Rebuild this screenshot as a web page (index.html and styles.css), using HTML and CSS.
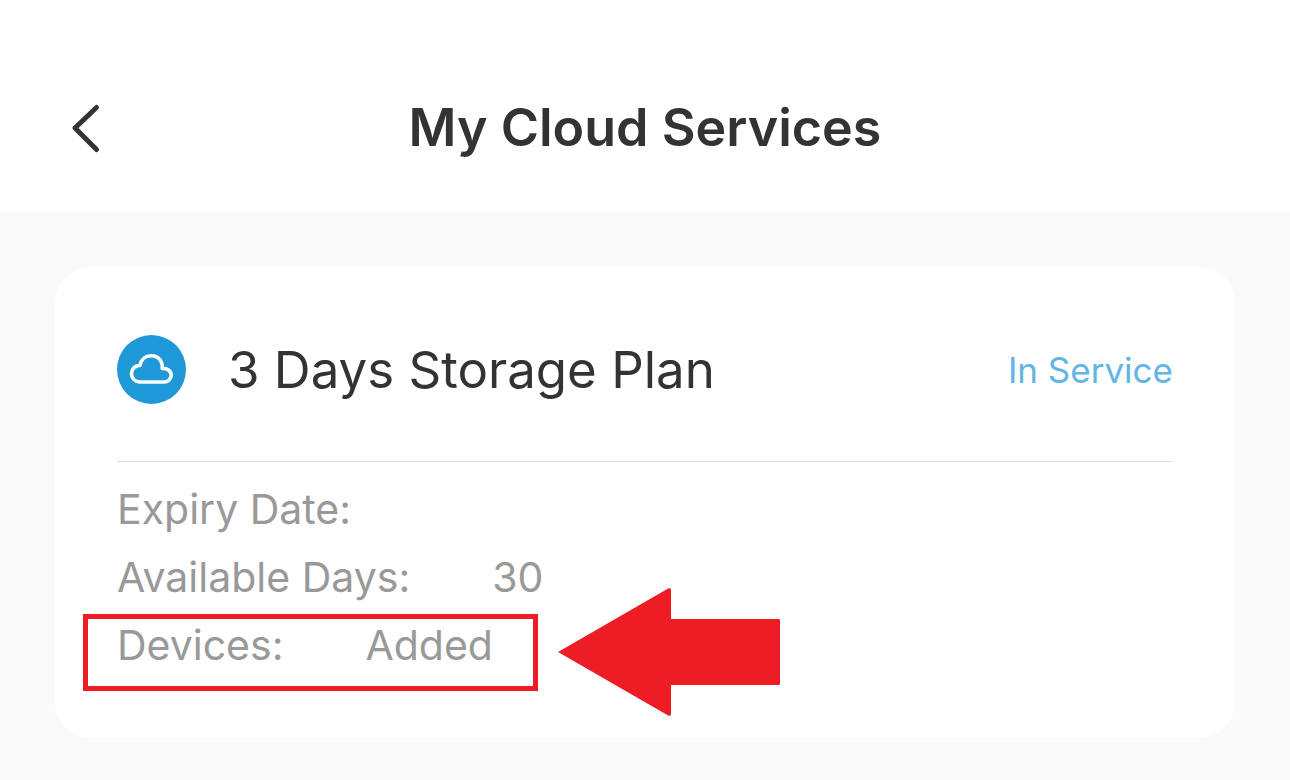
FILE: index.html
```html
<!DOCTYPE html>
<html lang="en">
<head>
    <meta charset="UTF-8">
    <meta name="viewport" content="width=device-width, initial-scale=1">
    <title>My Cloud Services</title>
    <link rel="stylesheet" href="styles.css">
</head>
<body>
<header class="header">
    <button class="back" type="button" aria-label="Back">
        <svg width="32" height="52" viewBox="0 0 32 52">
            <path d="M27.5 5.5 L6 26 L27.5 47.5"/>
        </svg>
    </button>
    <h1>My Cloud Services</h1>
</header>
<main class="main">
    <section class="card">
        <div class="card-head">
            <svg class="cloud" viewBox="0 0 69 69">
                <circle cx="34.5" cy="34.5" r="34.5"/>
                <path d="M22.5 47 A8.3 8.3 0 0 1 23 30.4 C24 24.6 28.5 20.8 34.3 20.8 C41.2 20.8 46 26.2 45.2 33.4 C50.7 33.2 54.2 36.2 54.2 40.1 C54.2 44 51.2 47 47.2 47 Z"/>
            </svg>
            <h2>3 Days Storage Plan</h2>
            <span class="status">In Service</span>
        </div>
        <dl class="info">
            <div class="row">
                <dt>Expiry Date:</dt>
                <dd></dd>
            </div>
            <div class="row">
                <dt>Available Days:</dt>
                <dd>30</dd>
            </div>
            <div class="row marked">
                <dt>Devices:</dt>
                <dd>Added</dd>
                <svg class="arrow" viewBox="0 0 222 128">
                    <path d="M0 64 L111 0 L113 1 V31 H221 L222 32 V96 L221 97 H113 V127 L111 128 Z"/>
                </svg>
            </div>
        </dl>
    </section>
</main>
</body>
</html>
```
FILE: styles.css
```css
*, *::before {
    box-sizing: border-box;
}

body {
    margin: 0;
    min-height: 100vh;
    background-color: #fafafa;
    color: #333;
    font-family: Inter, "Liberation Sans", sans-serif;
}

h1, h2, dl, dd {
    margin: 0;
}

.header {
    display: grid;
    grid-template-columns: 60px 1fr 60px;
    align-items: center;
    padding: 98px 55px 54px;
    background-color: #fff;
}

.header h1 {
    font-size: 52px;
    line-height: 60px;
    font-weight: 600;
    text-align: center;
}

.back {
    display: flex;
    justify-content: center;
    padding: 0;
    border: 0;
    background: none;
    cursor: pointer;
}

.back path {
    fill: none;
    stroke: #333;
    stroke-width: 5;
    stroke-linecap: round;
    stroke-linejoin: round;
}

.main {
    padding: 55px 55px 42px;
}

.card {
    padding: 0 62px 59px;
    border-radius: 36px;
    background-color: #fff;
}

.card-head {
    display: flex;
    align-items: center;
    padding: 68px 0 57px;
    border-bottom: 1px solid #ddd;
}

.card-head h2 {
    margin-left: 42px;
    font-size: 51px;
    line-height: 60px;
    font-weight: 400;
}

.cloud {
    width: 69px;
    height: 69px;
}

.cloud circle {
    fill: #1e98d7;
}

.cloud path {
    fill: none;
    stroke: #fff;
    stroke-width: 3.6;
    stroke-linejoin: round;
}

.status {
    margin-left: auto;
    color: #62b5e5;
    font-size: 35px;
}

.info {
    margin-top: 13px;
    color: #999;
    font-size: 41px;
    line-height: 68px;
}

.row {
    display: flex;
    gap: 82px;
}

/* red frame and arrow over the devices row */
.marked {
    position: relative;
}

.marked::before {
    content: "";
    position: absolute;
    top: 3px;
    left: -34px;
    width: 455px;
    height: 77px;
    border: 5px solid #ee1c25;
}

.arrow {
    position: absolute;
    top: -23px;
    left: 441px;
    width: 222px;
    height: 128px;
    fill: #ee1c25;
}
```
